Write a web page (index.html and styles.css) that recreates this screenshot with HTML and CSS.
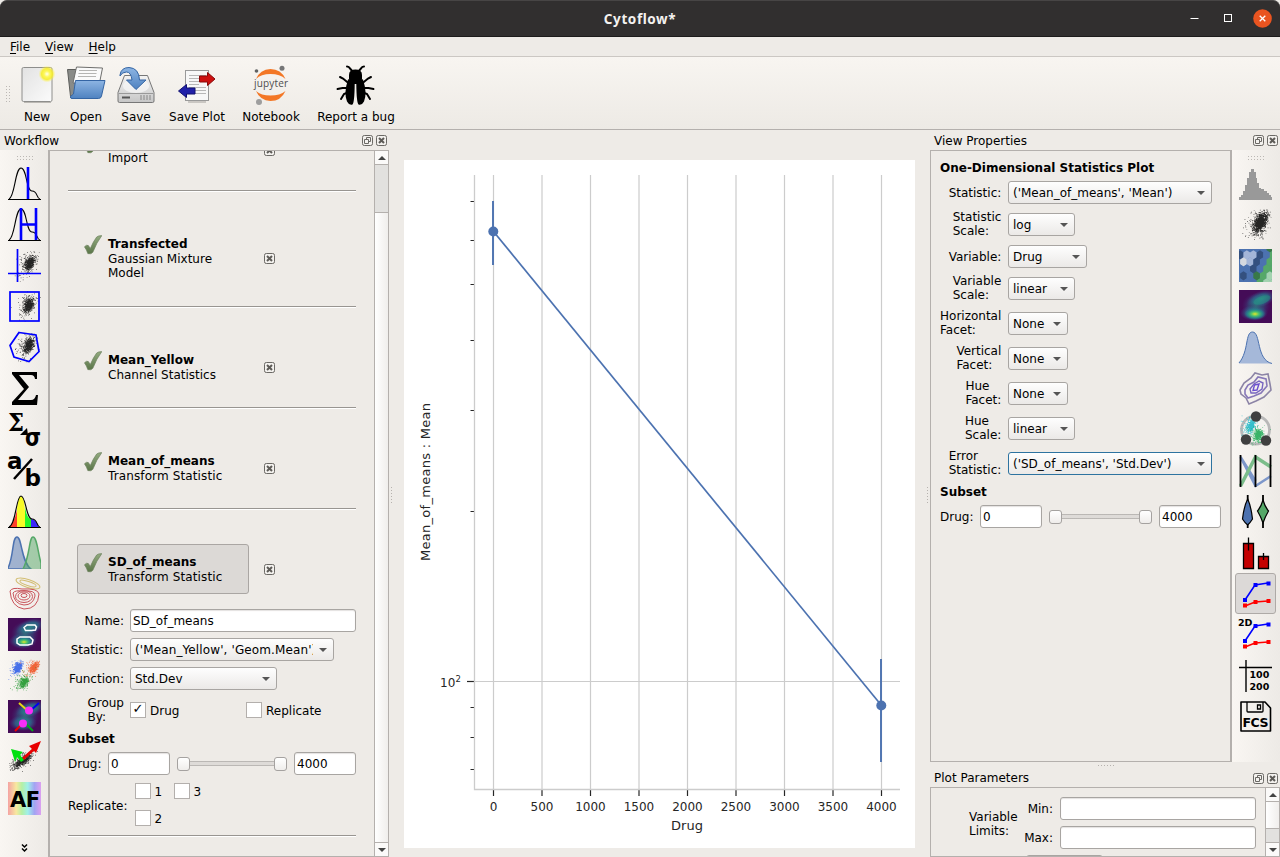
FILE: index.html
```html
<!DOCTYPE html>
<html lang="en">
<head>
<meta charset="utf-8">
<title>Cytoflow*</title>
<link rel="stylesheet" href="styles.css">
</head>
<body>
<svg class="defs" width="0" height="0">
  <defs>
    <linearGradient id="gCheck" x1="0" y1="0" x2="0" y2="1"><stop offset="0" stop-color="#93ab80"/><stop offset="1" stop-color="#5a7548"/></linearGradient>
    <linearGradient id="gBlue" x1="0" y1="0" x2="0" y2="1"><stop offset="0" stop-color="#8db5e3"/><stop offset="1" stop-color="#4f82c0"/></linearGradient>
    <linearGradient id="gGrey" x1="0" y1="0" x2="0" y2="1"><stop offset="0" stop-color="#f4f4f4"/><stop offset="1" stop-color="#c6c6c6"/></linearGradient>
    <linearGradient id="gPage" x1="0" y1="0" x2="1" y2="1"><stop offset="0" stop-color="#e2e2e2"/><stop offset="1" stop-color="#fbfbfb"/></linearGradient>
    <radialGradient id="gSun"><stop offset="0" stop-color="#fffff0"/><stop offset=".35" stop-color="#fdf75a"/><stop offset=".65" stop-color="#f8ee20" stop-opacity=".85"/><stop offset="1" stop-color="#fff26a" stop-opacity="0"/></radialGradient>
    <radialGradient id="gTeal"><stop offset="0" stop-color="#2a9a87"/><stop offset=".55" stop-color="#2b6d8b" stop-opacity=".8"/><stop offset="1" stop-color="#443a83" stop-opacity="0"/></radialGradient>
    <radialGradient id="gLime"><stop offset="0" stop-color="#e4e52a"/><stop offset=".35" stop-color="#4cc26a"/><stop offset=".7" stop-color="#21908c" stop-opacity=".7"/><stop offset="1" stop-color="#31688e" stop-opacity="0"/></radialGradient>
    <linearGradient id="gRainbow"><stop offset="0" stop-color="#f5a3a3"/><stop offset=".25" stop-color="#f8e8a0"/><stop offset=".42" stop-color="#b5f0a5"/><stop offset=".6" stop-color="#a0f0ea"/><stop offset=".8" stop-color="#a2a4f2"/><stop offset="1" stop-color="#dca0f0"/></linearGradient>
    <symbol id="check" viewBox="0 0 18 20"><path d="M.5 11.8Q2.500 9.500 4.300 10.500L6.300 13.500Q9.500 6 12.700 2Q14 .7 17.800.600Q12.500 7.500 8.800 17.300Q7 19.500 3.800 18.600Q2.800 15 .5 11.800Z" fill="url(#gCheck)" stroke="#6a7f5b" stroke-width=".7"/></symbol>
    <symbol id="close" viewBox="0 0 11 11"><rect x=".5" y=".5" width="10" height="10" rx="1.800" fill="#f3f1ee" stroke="#6b6965"/><path d="M3 3L8 8M8 3L3 8" stroke="#5d5b57" stroke-width="2"/></symbol>
    <symbol id="float" viewBox="0 0 11 11"><rect x=".5" y=".5" width="10" height="10" rx="1.800" fill="#f3f1ee" stroke="#6b6965"/><path d="M4.500 5V2.500H8.500V6.500H6.500M2.500 4.500H6.500V8.500H2.500Z" fill="none" stroke="#6b6965"/></symbol>
    <symbol id="heat" viewBox="0 0 33 33"><rect width="33" height="33" fill="#440c57"/><ellipse cx="22" cy="9" rx="15" ry="8" fill="url(#gTeal)" transform="rotate(-18 22 9)"/><ellipse cx="15" cy="23" rx="14" ry="8" fill="url(#gTeal)"/><ellipse cx="17" cy="16" rx="14" ry="13" fill="url(#gTeal)" opacity=".55"/></symbol>
    <symbol id="lines" viewBox="0 0 33 33"><g transform="translate(0 2)"><path d="M6 21L16 6L29 4" fill="none" stroke="#00f" stroke-width="1.600"/><path d="M6 27L16 23L29 22" fill="none" stroke="#f00" stroke-width="1.600"/><path d="M4 19h4v4h-4zM14.500 4h4v4h-4zM27.500 2.500h4v4h-4z" fill="#00f"/><path d="M4 24.500h4v4h-4zM14.500 21h4v4h-4zM27.500 20h4v4h-4z" fill="#f00"/></g></symbol>
  </defs>
</svg>

<header class="titlebar">
  <span class="title">Cytoflow*</span>
  <div class="winbtns">
    <svg width="9" height="20"><path d="M.5 9.500h8" stroke="#fff"/></svg>
    <svg width="8" height="20"><rect x=".5" y="5.500" width="7" height="7" fill="none" stroke="#fff"/></svg>
    <svg width="19" height="20"><circle cx="9.500" cy="9.500" r="9.300" fill="#e95420"/><path d="M6.700 6.700l5.600 5.600M12.300 6.700l-5.600 5.600" stroke="#fff" stroke-width="1.300"/></svg>
  </div>
</header>
<nav class="menubar"><span><u>F</u>ile</span><span><u>V</u>iew</span><span><u>H</u>elp</span></nav>

<div class="toolbar">
  <i class="grip-v"></i>
  <div class="tool w50"><svg width="40" height="40"><rect x="5" y="2.500" width="30" height="34" rx="1.500" fill="url(#gPage)" stroke="#8e8e8c"/><path d="M7 37.500h27" stroke="#bbb8b3"/><circle cx="30" cy="9" r="8.500" fill="url(#gSun)"/></svg><span>New</span></div>
  <div class="tool w48"><svg width="40" height="40"><path d="M1.500 4.500h10l2 3h20V31l-27 2.500q-1.500 0-2-2z" fill="#898b88" stroke="#5c5d5b"/><path d="M10.500 2l26 1l-3 15H7z" fill="#fafafa" stroke="#6e6e6c"/><path d="M13 5.500h18M12.500 8.500h18M12 11.500h18" stroke="#b5b5b3"/><path d="M9.500 15.500H39L35.500 31Q35 33.500 32.500 33.500H6Q4 33.500 4.500 31.500L7.500 29Z" fill="url(#gBlue)" stroke="#3465a4"/></svg><span>Open</span></div>
  <div class="tool w52"><svg width="40" height="40"><path d="M8.500 10.500h23l6.500 17v8.500q0 1.500-1.500 1.500h-33q-1.500 0-1.500-1.500v-8.500z" fill="url(#gGrey)" stroke="#777"/><path d="M3 28.500h34" stroke="#999"/><ellipse cx="20" cy="21" rx="13" ry="7" fill="#f8f8f8" opacity=".7"/><path d="M6 32.500h8" stroke="#555" stroke-width="2"/><path d="M25 30v5M28 30v5M31 30v5M34 30v5" stroke="#888"/><path d="M4 10Q5 2.500 13 2.500Q23 3 23.500 15H30L20 24.500L10.500 15H16Q15 7 10.500 7Q6 7 4 11Z" fill="url(#gBlue)" stroke="#3465a4"/></svg><span>Save</span></div>
  <div class="tool w70"><svg width="40" height="40"><rect x="8.500" y="5.500" width="23" height="30" fill="#f7f7f7" stroke="#999"/><path d="M11 37h18" stroke="#cac7c3" stroke-width="2"/><path d="M12 10.500h17M12 13.500h10M12 16.500h10M12 19.500h10M12 22.500h17M18 25.500h11M18 28.500h11" stroke="#b7b7b7"/><path d="M22.500 11h8v-3.500l7.500 6.500-7.500 6.500v-3.500h-8z" fill="#cd1010" stroke="#870b0b"/><path d="M18 23H9.500v-3.500L1.500 26 9.500 32.500v-3.500h8.500z" fill="#2020a8" stroke="#101070"/></svg><span>Save Plot</span></div>
  <div class="tool w78"><svg width="40" height="40"><path d="M5 14Q9 4.500 19.500 4Q30 4 34.500 14Q29 9 19.500 9Q10 9 5 14ZM5 26Q9 35.500 19.500 36Q30 36 34.500 26Q29 30.500 19.500 30.500Q10 30.500 5 26Z" fill="#f37726"/><circle cx="31" cy="3.300" r="2.500" fill="#767677"/><circle cx="5.500" cy="6" r="1.800" fill="#616262"/><circle cx="8" cy="37" r="3" fill="#9e9e9e"/><text x="3" y="22" class="jup" textLength="34">jupyter</text></svg><span>Notebook</span></div>
  <div class="tool w92"><svg width="40" height="40"><g fill="none" stroke="#000" stroke-width="2" stroke-linecap="round"><path d="M11 1.500q2 0 3 2l2.500 3M28 1.500q-2 0-3 2L22.500 6.500M4 12l3 1.500 6 5M35 12l-3 1.500-6 5M1.500 24l5-1h6M37.500 24l-5-1h-6M5 34l3-5 5-2M34 34l-3-5-5-2"/></g><path d="M13 10q0-5.500 6.500-5.500t6.500 5.500v4H13z"/><path d="M12 14.500Q7.500 28 11 36.500q2 4 5.500 3q2-2 2.200-20.500h1.600q.2 18.500 2.200 20.500q3.500 1 5.500-3q3.500-8.500-1-22L22 13h-5z"/></svg><span>Report a bug</span></div>
</div>

<main class="main">
  <section class="dock left">
    <div class="dock-head"><span>Workflow</span><svg width="11" height="11"><use href="#float"/></svg><svg width="11" height="11"><use href="#close"/></svg></div>
    <div class="dock-body">
      <div class="icons">
        <i class="grip-h"></i>
        <svg viewBox="0 0 33 33"><path d="M1 32C7 30 7 1 13 1S18 24 24 24S28 31 32 32M0 32.500h33" class="k"/><path d="M20 0v32" class="b"/></svg>
        <svg viewBox="0 0 33 33"><path d="M1 32C7 30 7 1 13 1S18 24 24 24S28 31 32 32M0 32.500h33" class="k"/><path d="M13 0v32M28 0v32M13 16.500h15" class="b"/></svg>
        <svg viewBox="0 0 33 33"><path class="dots" data-cloud="21.500,14,2.600,4,750"/><path d="M9.500 0v33M0 24.500h33" class="b2"/></svg>
        <svg viewBox="0 0 33 33"><path class="dots" data-cloud="20.500,15,2.600,4,750"/><rect x="2" y="2" width="29" height="29" class="b2"/></svg>
        <svg viewBox="0 0 33 33"><path class="dots" data-cloud="20.500,14,2.600,4,750"/><path d="M11 1.500L28 4L31 20.500L21 30.500L6 26L2 14.500Z" class="b2"/></svg>
        <svg viewBox="0 0 33 33"><path d="M4 0h25v7h-2q-.5-4-4-4H11L21 15L10 28h13q4 0 5-5h2l-1 10H4v-3L16 17L4 2z"/></svg>
        <svg viewBox="0 0 33 33"><text x="0" y="18" class="serif" font-size="24" textLength="16" lengthAdjust="spacingAndGlyphs">Σ</text><text x="17" y="32.500" class="heavy" font-size="24" textLength="16" lengthAdjust="spacingAndGlyphs">σ</text><path d="M12 22l7-7 1 7z"/></svg>
        <svg viewBox="0 0 33 33"><text x="-1" y="14.500" class="heavy" font-size="23">a</text><text x="16.500" y="32" class="heavy" font-size="23">b</text><path d="M6 25L24 5" stroke="#000" stroke-width="2.500"/></svg>
        <svg viewBox="0 0 33 33"><path d="M1 32Q6 29 9 15V32z" fill="#ff412b"/><path d="M9 32V14Q10 1 13 1T17 16V32z" fill="#f8fb28"/><path d="M17 32V12Q19 24 23 24V32z" fill="#27f52a"/><path d="M23 32V24Q28 24 31 32z" fill="#3a27fa"/><path d="M1 32C8 30 8 1 13 1S18 24 24 24S28 31 32 32M0 32.500h33" class="k"/></svg>
        <svg viewBox="0 0 33 33" class="clip"><path d="M0 32C6 20 4 1 9 1S13 26 23 33H0" fill="#4c72b0" fill-opacity=".5" stroke="#4c72b0" stroke-width="1.500"/><path d="M15 33C22 20 21 1 25 1S30 17 33 27V33" fill="#55a868" fill-opacity=".5" stroke="#55a868" stroke-width="1.500"/></svg>
        <svg viewBox="0 0 33 33" fill="none"><g stroke="#d2bd72"><ellipse cx="20" cy="6.500" rx="12.500" ry="4" transform="rotate(18 20 6.500)"/><ellipse cx="20" cy="6.500" rx="8.500" ry="2" transform="rotate(18 20 6.500)"/></g><g stroke="#c9555c"><path d="M2 14Q4 10 14 12Q30 11 31 17Q30 32 16 32Q3 30 2 14Z"/><path d="M5 16Q7 13 15 14Q28 13 27 19Q25 28 16 28Q6 27 5 16Z"/><ellipse cx="16" cy="19.500" rx="8.500" ry="6"/><ellipse cx="16" cy="19" rx="6" ry="4"/><ellipse cx="16" cy="18.500" rx="3" ry="2"/></g></svg>
        <svg viewBox="0 0 33 33"><use href="#heat"/><ellipse cx="16" cy="24" rx="9" ry="5" fill="url(#gLime)"/><g fill="none" stroke="#fff" stroke-width="1.500"><path d="M16 9.500l3-2.500h8l1.500 2-1 3-4 .500h-6z"/><path d="M9 21l3-2h10l3 3-1 4-4 1h-8l-3-2z"/></g></svg>
        <svg viewBox="0 0 33 33"><path class="dots" fill="#2457e8" data-cloud="9.500,8,2.200,3,520"/><path class="dots" fill="#f04a18" data-cloud="26,8,2.200,3,520"/><path class="dots" fill="#129020" data-cloud="15.500,23,2.400,3,520"/></svg>
        <svg viewBox="0 0 33 33"><use href="#heat"/><path d="M11 3l9 8" stroke="#e5d816" stroke-width="2"/><path d="M31 3l-9 8" stroke="#0000f0" stroke-width="2"/><path d="M7 31l8-8" stroke="#f00000" stroke-width="2"/><path d="M25 31l-8-8" stroke="#00a818" stroke-width="2"/><circle cx="21" cy="10.500" r="4" fill="#f72df7"/><circle cx="15" cy="23.500" r="4" fill="#f72df7"/></svg>
        <svg viewBox="0 0 33 33"><path class="dots" data-cloud="14.500,19.500,3,3.600,700,1.200"/><path d="M15 18L27 7" stroke="#e80000" stroke-width="3"/><path d="M33 0L21 5l7 7z" fill="#e80000"/><path d="M3 8l12 3-3 3 4 5-3 2-4-5-2 5z" fill="#00e010"/></svg>
        <svg viewBox="0 0 33 33"><rect width="33" height="33" fill="url(#gRainbow)"/><text x="2" y="24.500" class="heavy" font-size="21" textLength="30">AF</text></svg>
        <svg viewBox="0 0 33 33" class="more"><path d="M14 15.500l2.500 2.500 2.500-2.500M14 19.500l2.500 2.500 2.500-2.500" fill="none" stroke="#000" stroke-width="1.500"/></svg>
      </div>
      <div class="scroll">
        <div class="flow">
          <article class="op"><div class="row"><div class="opbtn"><svg width="18" height="20"><use href="#check"/></svg><p><b>Import</b><br>Import</p></div><svg width="11" height="11"><use href="#close"/></svg></div></article>
          <article class="op"><div class="row"><div class="opbtn tall"><svg width="18" height="20"><use href="#check"/></svg><p><b>Transfected</b><br>Gaussian Mixture<br>Model</p></div><svg width="11" height="11"><use href="#close"/></svg></div></article>
          <article class="op"><div class="row"><div class="opbtn"><svg width="18" height="20"><use href="#check"/></svg><p><b>Mean_Yellow</b><br>Channel Statistics</p></div><svg width="11" height="11"><use href="#close"/></svg></div></article>
          <article class="op"><div class="row"><div class="opbtn"><svg width="18" height="20"><use href="#check"/></svg><p><b>Mean_of_means</b><br><span class="loose">Transform Statistic</span></p></div><svg width="11" height="11"><use href="#close"/></svg></div></article>
          <article class="op last"><div class="row"><div class="opbtn sel"><svg width="18" height="20"><use href="#check"/></svg><p><b>SD_of_means</b><br><span class="loose">Transform Statistic</span></p></div><svg width="11" height="11"><use href="#close"/></svg></div>
            <div class="form f-left">
              <label>Name:</label><div class="input">SD_of_means</div>
              <label class="nudge">Statistic:</label><div class="combo w204"><span class="loose">('Mean_Yellow', 'Geom.Mean')</span></div>
              <label>Function:</label><div class="combo w147"><span>Std.Dev</span></div>
              <label>Group<br>By:</label><div class="checks"><span class="cb on">Drug</span><span class="cb">Replicate</span></div>
            </div>
            <h4>Subset</h4>
            <div class="range"><label>Drug:</label><div class="input">0</div><div class="slider"><i></i><i></i></div><div class="input">4000</div></div>
            <div class="reps"><label>Replicate:</label><div class="repgrid"><span class="cb">1</span><span class="cb">3</span><span class="cb">2</span></div></div>
          </article>
          <article class="op"></article>
        </div>
        <div class="sbar"><i class="up"></i><i class="groove g48"></i><i class="thumb"></i><i class="down"></i></div>
      </div>
    </div>
  </section>

  <section class="center">
    <i class="grip-s"></i>
    <svg class="plot" width="511" height="688" viewBox="404 160 511 688">
      <rect x="404" y="160" width="511" height="688" fill="#fff"/>
      <g id="grid"></g>
      <path d="M474.500 175V789.500H900" fill="none" stroke="#ccc" stroke-width="1.300"/>
      <path d="M493.500 231.500L881.500 705.500" stroke="#4c72b0" stroke-width="1.700"/>
      <path d="M493 201V265M881 659V762" stroke="#4c72b0" stroke-width="1.900"/>
      <circle cx="493.300" cy="231.500" r="5" fill="#4c72b0"/><circle cx="881.300" cy="705.500" r="5" fill="#4c72b0"/>
      <text x="440" y="687">10</text><text x="455.500" y="682" class="sup">2</text>
      <text x="687" y="830" class="axis" text-anchor="middle">Drug</text>
      <text transform="translate(430 482) rotate(-90)" class="axis" text-anchor="middle" textLength="158">Mean_of_means : Mean</text>
    </svg>
    <i class="grip-s right"></i>
  </section>

  <section class="dock rightd">
    <div class="dock-head"><span>View Properties</span><svg width="11" height="11"><use href="#float"/></svg><svg width="11" height="11"><use href="#close"/></svg></div>
    <div class="dock-body vp">
      <div class="props">
        <h4>One-Dimensional Statistics Plot</h4>
        <div class="form f-right">
          <label>Statistic:</label><div class="combo w204"><span>('Mean_of_means', 'Mean')</span></div>
          <label>Statistic<br>Scale:</label><div class="combo w67"><span>log</span></div>
          <label>Variable:</label><div class="combo w79"><span>Drug</span></div>
          <label>Variable<br>Scale:</label><div class="combo w67"><span>linear</span></div>
          <label>Horizontal<br>Facet:</label><div class="combo w60"><span>None</span></div>
          <label>Vertical<br>Facet:</label><div class="combo w60"><span>None</span></div>
          <label>Hue<br>Facet:</label><div class="combo w60"><span>None</span></div>
          <label>Hue<br>Scale:</label><div class="combo w67"><span>linear</span></div>
          <label>Error<br>Statistic:</label><div class="combo w204 focus"><span>('SD_of_means', 'Std.Dev')</span></div>
        </div>
        <h4>Subset</h4>
        <div class="range"><label>Drug:</label><div class="input">0</div><div class="slider"><i></i><i></i></div><div class="input">4000</div></div>
      </div>
      <div class="icons">
        <i class="grip-h"></i>
        <svg viewBox="0 0 33 33"><path d="M0 33V30H2V28H4V24H6V18H8V11H10V5H12V2H15V5H17V11H18V16H20V21H22V22H25V24H28V26H30V28H32V30H33V33Z" fill="#999"/></svg>
        <svg viewBox="0 0 33 33"><path class="dots" data-cloud="21,14.500,3.300,5,1500"/></svg>
        <svg viewBox="0 0 33 33" id="hex" class="clip"></svg>
        <svg viewBox="0 0 33 33"><use href="#heat"/><ellipse cx="16" cy="24" rx="11" ry="6" fill="url(#gLime)"/><ellipse cx="23" cy="10" rx="9" ry="4" fill="#25a584" opacity=".35" transform="rotate(-20 23 10)"/></svg>
        <svg viewBox="0 0 33 33"><path d="M0 32C10 20 6 1 13.500 1C22 1 17 29 33 32.500H0" fill="#a5b8d9"/><path d="M0 32C10 20 6 1 13.500 1C22 1 17 29 33 32.500" fill="none" stroke="#4c72b0"/></svg>
        <svg viewBox="0 0 33 33" fill="none" stroke-width="1.600"><path d="M1 18L5 11L12 6L16 1L23 3L29 2L31 12L32 18L25 25L17 29L10 32L7 26L2 22Z" stroke="#8c84a6"/><path d="M6 18L9 13L15 10L19 5L27 7L28 14L22 21L15 24L9 26L6 22Z" stroke="#8778b8"/><path d="M11 17L15 12L20 9L24 11L23 17L17 21L12 21Z" stroke="#7765c0" stroke-width="1.400"/><path d="M15.500 13L20 12L18 18L14 18.500Z" stroke="#6b4fd0" stroke-width="1.400"/></svg>
        <svg viewBox="0 0 33 33"><circle cx="16.500" cy="17" r="14" fill="#f4f2ef" stroke="#b8b8b8" stroke-width="2.800"/><path class="dots" fill="#13b5c5" data-cloud="12,12,2.200,3.500,600"/><path class="dots" fill="#18a850" data-cloud="19,21.500,2.500,3,600,0"/><g fill="#404040"><circle cx="17" cy="3.500" r="5.200"/><circle cx="7" cy="26.500" r="5.200"/><circle cx="27" cy="27.500" r="5.200"/></g></svg>
        <svg viewBox="0 0 33 33" fill="none"><path d="M1.500 3L16.500 32L32 22M1.500 3L16.500 27" stroke="#7d97ca" stroke-width="2.600"/><path d="M1.500 32L16.500 3L32 13" stroke="#7bbd8a" stroke-width="3.500"/><path d="M1.500 1v32M16.500 1v32M31.500 1v32" stroke="#000" stroke-width="1.800"/></svg>
        <svg viewBox="0 0 33 33" stroke="#000" stroke-width="1.200"><path d="M8.700 0v33M24 0v33" stroke-width="1.800"/><path d="M8.700 4Q12 11 13.500 24Q11 28 8.700 30Q6 28 3.500 24Q5 11 8.700 4Z" fill="#4c72b0"/><path d="M24 5Q26 12 29.500 16Q26 22 24 28Q22 22 18.500 16Q22 12 24 5Z" fill="#55a868"/></svg>
        <svg viewBox="0 0 33 33" stroke="#000"><path d="M4.500 7.500h10v25h-10zM19.500 20.500h10v12h-10z" fill="#c40000" stroke-width="1.300"/><path d="M9.500 1.500v13M24.500 17v7" stroke-width="1.300"/></svg>
        <svg viewBox="0 0 33 33" class="active"><use href="#lines"/></svg>
        <svg viewBox="0 0 33 33"><use href="#lines"/><text x="-1" y="8" class="heavy" font-size="9.500">2D</text></svg>
        <svg viewBox="0 0 33 33"><path d="M7 1v32M0 8.500h33" stroke="#000" stroke-width="1.400"/><text x="10.500" y="18.500" class="heavy" font-size="9.500">100</text><text x="10.500" y="31" class="heavy" font-size="9.500">200</text></svg>
        <svg viewBox="0 0 33 33"><path d="M2 2H26L31.500 8V31H2Z" fill="none" stroke="#000" stroke-width="1.600" stroke-linejoin="round"/><path d="M8 2v9q0 1 1 1h14q1 0 1-1V2M18.500 5h3v4h-3z" fill="none" stroke="#000" stroke-width="1.300"/><text x="3.500" y="27" class="heavy" font-size="12.500" textLength="26">FCS</text></svg>
      </div>
    </div>
    <div class="split"><i></i></div>
    <div class="dock-head pp-head"><span>Plot Parameters</span><svg width="11" height="11"><use href="#float"/></svg><svg width="11" height="11"><use href="#close"/></svg></div>
    <div class="params">
      <div class="pbody">
        <label class="vl">Variable<br>Limits:</label>
        <div class="limits"><label>Min:</label><div class="input"></div><label>Max:</label><div class="input"></div><div class="combo next"></div></div>
      </div>
      <div class="sbar"><i class="up"></i><i class="thumb"></i><i class="groove g14"></i><i class="down"></i></div>
    </div>
  </section>
</main>
<script src="draw.js"></script>
</body>
</html>
```
FILE: styles.css
```css
* { box-sizing: border-box; }
body { margin: 0; width: 1280px; height: 857px; overflow: hidden; display: flex; flex-direction: column; background: #eeebe7; color: #000; font: 12px/14px "DejaVu Sans", sans-serif; }
svg { display: block; flex: none; }
h4, p { margin: 0; }

.titlebar { height: 37px; flex: none; display: grid; grid-template-columns: 1fr auto 1fr; align-items: center; background: #312f2f; border-top: 1px solid #474545; border-bottom: 1px solid #1c1b1b; border-radius: 7px 7px 0 0; }
.title { grid-column: 2; color: #f4f2f0; font: bold 13.5px/18px "Noto Sans", sans-serif; letter-spacing: .6px; }
.winbtns { justify-self: end; display: flex; align-items: center; gap: 25px; padding-right: 8px; }
.winbtns svg:nth-child(2) { margin-right: -4px; }
.menubar { height: 20px; flex: none; display: flex; gap: 15px; padding: 3px 10px 0; border-bottom: 1px solid #cbc7c3; }
.menubar u { text-underline-offset: 2px; }
.toolbar { height: 73px; flex: none; display: flex; padding: 8px 0 0 5px; background: linear-gradient(#f8f5f1, #edeae5); border-bottom: 1px solid #b4b0ad; }
.grip-v { width: 5px; height: 17px; margin: 20px 2px 0 0; background: radial-gradient(circle, #bcb8b4 .7px, transparent 1px) 0 0 / 3px 3px; }
.tool { display: flex; flex-direction: column; align-items: center; white-space: nowrap; }
.tool span { margin-top: 5px; }
.tool svg { overflow: visible; }
.w50 { width: 50px; } .w48 { width: 48px; } .w52 { width: 52px; } .w70 { width: 70px; } .w78 { width: 78px; } .w92 { width: 92px; }
.jup { font: 10px "Open Sans", sans-serif; fill: #4e4e4e; }

.main { flex: 1; min-height: 0; display: flex; }
.dock { display: flex; flex-direction: column; flex: none; }
.left { width: 389px; }
.rightd { width: 350px; }
.dock-head { height: 20px; flex: none; display: flex; align-items: center; gap: 3px; padding: 1px 2px 0 4px; }
.dock-head span { flex: 1; }
.dock-body { flex: 1; min-height: 0; display: flex; }
.icons { width: 48px; flex: none; display: flex; flex-direction: column; align-items: center; gap: 8px; padding: 5px 0 0 1px; background: linear-gradient(90deg, #f9f6f2, #edeae6); overflow: hidden; }
.icons svg { width: 33px; height: 33px; overflow: visible; }
.icons svg.clip { overflow: hidden; }
.icons .more { margin-top: 6px; }
.grip-h { width: 17px; height: 5px; flex: none; margin-bottom: -1px; background: radial-gradient(circle, #bcb8b4 .7px, transparent 1px) 0 0 / 3px 3px; }
.icons svg.active { width: 41px; height: 41px; margin: -4px 0; padding: 3px; background: #dcd9d7; border: 1px solid #aeaaa7; border-radius: 3px; }
.k { fill: none; stroke: #000; stroke-width: 1.1; }
.b { fill: none; stroke: #00f; stroke-width: 2.6; }
.b2 { fill: none; stroke: #00f; stroke-width: 1.7; }
.serif { font-family: "DejaVu Serif", serif; font-weight: bold; }
.heavy { font-family: "DejaVu Sans", sans-serif; font-weight: bold; }

.scroll { flex: 1; display: flex; min-width: 0; border: 1px solid #b4b0ad; border-left-width: 2px; }
.flow { flex: 1; overflow: hidden; padding: 0 18px; }
.op:first-child { margin-top: -62px; }
.op { border-top: 1px solid #989591; box-shadow: inset 0 1px #fff; padding: 35px 0 15px; }
.op.last { padding-bottom: 6px; }
.row { display: flex; align-items: center; gap: 15px; padding-left: 9px; }
.opbtn { width: 172px; height: 50px; display: flex; gap: 6px; padding: 10px 5px 0 6px; border: 1px solid transparent; border-radius: 3px; white-space: nowrap; }
.opbtn b { line-height: 15px; }
.opbtn.tall { height: 65px; }
.opbtn.sel { background: #dcd9d6; border-color: #aaa6a3; }
.opbtn svg { margin-top: -2px; }
.opbtn p { margin-top: -.3px; }
.loose { letter-spacing: .12px; }

.form { display: grid; gap: 6px; align-items: center; }
.form label { justify-self: end; }
.form label:has(br) { padding-bottom: 1px; }
.form .nudge { margin-right: .7px; }
.f-left { grid-template-columns: 56px 226px; margin: 15px 0 6px; }
.f-right { grid-template-columns: 62px 1fr; margin: 6px 0; }
.f-right label { margin-right: .7px; }
.input, .combo { height: 23px; border: 1px solid #a8a5a2; border-radius: 3px; background: #fff; line-height: 22px; white-space: nowrap; }
.input { padding-left: 2px; box-shadow: inset 0 1px 1px #e4e2e0; }
.combo { display: flex; align-items: center; padding: 0 6px 0 4px; background: linear-gradient(#fefefe, #ebe9e7); }
.combo span { flex: 1; overflow: hidden; }
.combo::after { content: ""; margin-left: 6px; border: 4px solid transparent; border-top: 4.5px solid #555; border-bottom: 0; }
.combo.focus { border-color: #2d73a0; }
.w204 { width: 204px; } .w147 { width: 147px; } .w67 { width: 67px; } .w79 { width: 79px; } .w60 { width: 60px; }
.checks { display: grid; grid-template-columns: 116px 1fr; }
.cb { display: flex; align-items: center; gap: 4px; }
.checks .cb { position: relative; gap: 5px; margin-left: -1px; }
.checks .cb::before { margin-left: 1px; margin-right: -1px; }
.cb::before { content: ""; width: 14px; height: 14px; flex: none; margin-top: -1px; border: 1px solid #b3afac; background: #fff; }
.cb.on::before { content: "✓"; font: bold 13px/12px "DejaVu Sans"; text-align: center; }
h4 { height: 15px; line-height: 17px; }
.range { display: flex; align-items: center; margin-top: 6px; }
.range label { width: 40px; }
.range .input { width: 62px; }
.slider { flex: 1; margin: 0 7px; display: flex; justify-content: space-between; background: linear-gradient(#a9a6a3, #dedbd8 30% 70%, #a9a6a3) center / calc(100% - 20px) 5px no-repeat; }
.slider i { width: 13px; height: 14px; border: 1px solid #a5a2a0; border-radius: 3px; background: linear-gradient(#fff, #efedeb); }
.reps { display: flex; align-items: center; margin-top: 6px; }
.reps label { width: 67px; padding-top: 1px; }
.repgrid { display: grid; grid-template-columns: 39px 39px; grid-auto-rows: 21px; row-gap: 6px; margin-left: -.5px; }

.sbar { width: 14px; flex: none; display: flex; flex-direction: column; border-left: 1px solid #b4b0ad; background: #fbfaf9; }
.sbar i { display: flex; justify-content: center; align-items: center; }
.up, .down { height: 14px; flex: none; }
.up { border-bottom: 1px solid #b4b0ad; }
.down { border-top: 1px solid #b4b0ad; }
.up::after, .down::after { content: ""; border: 4px solid transparent; }
.up::after { border-bottom-color: #444; border-top: 0; }
.down::after { border-top-color: #444; border-bottom: 0; }
.thumb { flex: 1; background: linear-gradient(90deg, #fff, #f0eeec); }
.groove { background: #e2e1df; flex: none; }
.g48 { height: 48px; border-bottom: 1px solid #b4b0ad; }
.g14 { height: 14px; border-top: 1px solid #b4b0ad; }

.center { flex: 1; display: flex; align-items: flex-end; justify-content: space-between; padding: 0 1px 9px; }
.grip-s { width: 3px; height: 17px; align-self: center; margin-top: 10px; background: radial-gradient(circle, #b6b2ae .7px, transparent 1px) 0 0 / 3px 3px; }
.plot { margin-right: 1px; }
.plot text { font-family: "DejaVu Sans", sans-serif; font-size: 12px; fill: #262626; }
.plot .axis { font-size: 13px; }
.plot .sup { font-size: 8.5px; }

.vp { flex: none; height: 612px; }
.vp .icons { padding: 5px 1px 0 0; }
.props { width: 302px; flex: none; padding: 9px 9px 0; border: 1px solid #b4b0ad; border-right-width: 2px; }
.split { height: 6px; flex: none; display: flex; justify-content: center; align-items: center; }
.split i { width: 17px; height: 3px; background: radial-gradient(circle, #b6b2ae .7px, transparent 1px) 0 0 / 3px 3px; }
.pp-head { height: 19px; }
.pp-head span { margin-top: -1px; }
.params { flex: 1; min-height: 0; display: flex; border: 1px solid #b4b0ad; }
.pbody { flex: 1; display: flex; overflow: hidden; padding: 9px 9px 0 38px; }
.vl { width: 54px; margin-top: 13px; }
.limits { flex: 1; display: grid; grid-template-columns: 31px 196px; gap: 6px 7px; align-content: start; justify-content: end; align-items: center; }
.limits label { justify-self: end; }
.limits .next { grid-column: 1 / 3; width: 77px; margin-left: 4px; }
```
FILE: draw.js
```js
const NS = 'http://www.w3.org/2000/svg';
const add = (parent, tag, attrs, text) => {
  const el = document.createElementNS(NS, tag);
  for (const k in attrs) el.setAttribute(k, attrs[k]);
  if (text) el.textContent = text;
  parent.appendChild(el);
};

// seeded generator keeps the scatter icons stable between loads
let seed = 7;
const rnd = () => (seed = (seed * 16807) % 2147483647) / 2147483647;
const gauss = () => Math.sqrt(-2 * Math.log(rnd())) * Math.cos(6.2832 * rnd());

// data-cloud: center x, center y, spread x, spread y, count, lean to the right
document.querySelectorAll('.dots').forEach(p => {
  const [cx, cy, sx, sy, n, lean = 0.45] = p.dataset.cloud.split(',').map(Number);
  let d = '';
  for (let i = 0; i < n; i++) {
    const wide = i % 6 === 0 ? 1.8 : 0.85;
    const v = gauss() * wide;
    const x = cx + gauss() * sx * wide - v * sx * lean - (wide > 1 ? 2 : 0);
    const y = cy + v * sy;
    if (x > 0.5 && x < 32 && y > 0.5 && y < 32) d += `M${x.toFixed(1)} ${y.toFixed(1)}h.7v.7h-.7z`;
  }
  p.setAttribute('d', d);
  p.setAttribute('fill-opacity', '.85');
});

// hexbin icon
const hex = document.getElementById('hex');
add(hex, 'rect', { width: 33, height: 33, fill: '#4c72b0' });
const rows = ['bbbbbt', 'dlldbg', 'bwldbg', 'bbdbgg', 'bdbtgp', 'bbbgpp'];
const colors = { b: '#4c72b0', d: '#34507f', l: '#a3b5d8', w: '#d5d9e0', g: '#55a868', t: '#387848', p: '#a3d3b0' };
rows.forEach((row, r) => [...row].forEach((c, i) => {
  const x = i * 6.6 + (r % 2 ? 1.2 : -2.1), y = r * 7 - 1;
  add(hex, 'path', { d: `M${x} ${y - 4.8}l3.4 2.4v4.8l-3.4 2.4l-3.4-2.4v-4.8z`, fill: colors[c] });
}));

// plot grid, ticks and tick labels
const grid = document.getElementById('grid');
for (let v = 0; v <= 4000; v += 500) {
  const x = 493.5 + v * 0.097;
  add(grid, 'path', { d: `M${x} 175V789`, stroke: '#ccc', 'stroke-width': 1.2 });
  add(grid, 'path', { d: `M${x} 790V796`, stroke: '#262626', 'stroke-width': 1.2 });
  add(grid, 'text', { x, y: 811, 'text-anchor': 'middle' }, String(v));
}
add(grid, 'path', { d: 'M474 681.5H900', stroke: '#ccc', 'stroke-width': 1.2 });
add(grid, 'path', { d: 'M467 681.5H474', stroke: '#262626', 'stroke-width': 1.2 });
[70, 80, 90, 200, 300, 400, 500, 600, 700].forEach(v => {
  const y = Math.floor(681.5 - 568 * Math.log10(v / 100) + 0.5) + 0.5;
  add(grid, 'path', { d: `M470.5 ${y}H474`, stroke: '#262626', 'stroke-width': 1 });
});
```
